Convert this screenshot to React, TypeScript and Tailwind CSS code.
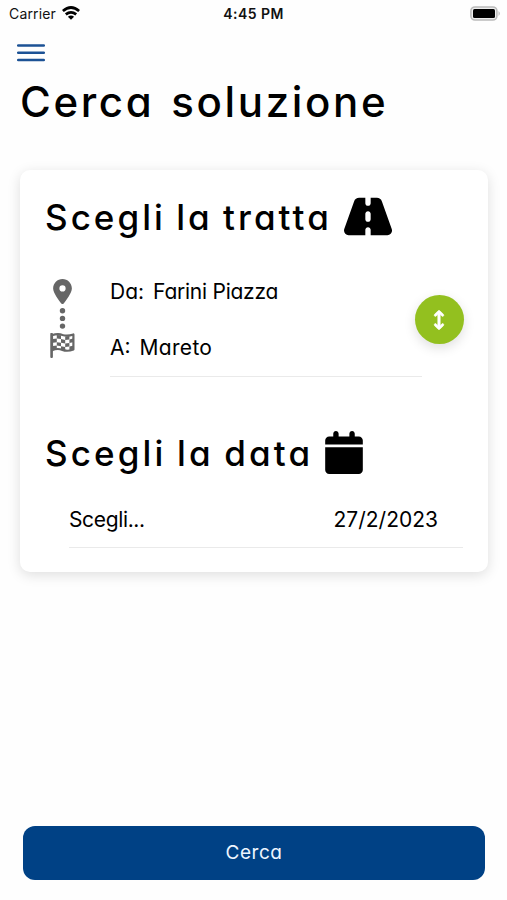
import { FaArrowsUpDown, FaCalendar, FaLocationDot, FaRoad } from 'react-icons/fa6';

function StatusBar() {
  return (
    <header className="grid h-[28px] shrink-0 grid-cols-3 items-center px-[9px] text-[#111] [font-feature-settings:normal]">
      <div className="flex items-center gap-[6px]">
        <span className="text-[14px] leading-[28px] tracking-[0.15px]">Carrier</span>
        <svg className="-mt-[2px]" width="18" height="14" viewBox="0 0 18 14" fill="none" stroke="#000" strokeWidth="2.7">
          <path d="M0.9 5 Q9 -2 17.1 5" />
          <path d="M3.8 8.4 Q9 4.2 14.2 8.4" />
          <path d="M9 13.8 L5.9 10.8 Q9 8.4 12.1 10.8 Z" fill="#000" stroke="none" />
        </svg>
      </div>
      <span className="text-center text-[14px] leading-[28px] font-semibold tracking-[0.45px] whitespace-nowrap">
        4:45 PM
      </span>
      <svg className="-mr-[3px] justify-self-end" width="32" height="16" viewBox="0 0 32 16">
        <rect x="1.9" y="1" width="26" height="13" rx="4" fill="#eee" stroke="#bbb" strokeWidth="1.6" />
        <rect x="4" y="3" width="22" height="9" rx="1.5" fill="#000" />
        <path d="M29.6 5 Q31.8 7.5 29.6 10 Z" fill="#aaa" />
      </svg>
    </header>
  );
}

function MenuButton() {
  return (
    <button type="button" aria-label="Menu" className="mt-[16px] ml-[17px] h-[18px] w-[28px]">
      <svg width="28" height="18" viewBox="0 0 28 18" stroke="#1c5295" strokeWidth="2.5" strokeLinecap="round">
        <path d="M1.2 1.5 H26.8 M1.2 8.8 H26.8 M1.2 16.1 H26.8" />
      </svg>
    </button>
  );
}

function CheckeredFlag() {
  return (
    <svg width="25" height="25" viewBox="0 0 25 25">
      <path d="M1.6 1 V23.8" stroke="currentColor" strokeWidth="2.6" strokeLinecap="round" />
      <path
        d="M2 2.2 Q8 0.2 12.5 2 Q17.5 3.6 23.4 1.5 V16.4 Q17.5 18.8 12.5 16.9 Q7.5 15 2 17.2 Z"
        fill="none"
        stroke="currentColor"
        strokeWidth="2.2"
        strokeLinejoin="round"
      />
      <g fill="currentColor">
        <path d="M6.8 2 L11 2.3 V6 L6.8 5.6 Z" />
        <path d="M15.2 3.4 L19.4 3 V6.4 L15.2 6.9 Z" />
        <path d="M3 6 L6.8 5.6 V9.2 L3 9.8 Z" />
        <path d="M11 6 L15.2 6.9 V10.6 L11 9.8 Z" />
        <path d="M19.4 6.4 L23 5.5 V9.3 L19.4 10.1 Z" />
        <path d="M6.8 9.2 L11 9.8 V13.2 L6.8 12.6 Z" />
        <path d="M15.2 10.6 L19.4 10.1 V13.6 L15.2 14 Z" />
        <path d="M3 13 L6.8 12.6 V16 L3 16.6 Z" />
        <path d="M11 13.2 L15.2 14 V17.2 L11 16.4 Z" />
        <path d="M19.4 13.6 L23 12.8 V16.4 L19.4 17.2 Z" />
      </g>
    </svg>
  );
}

function RouteIcons() {
  return (
    <div className="flex w-[35px] flex-col items-center pt-[15px] text-[#666]">
      <FaLocationDot className="h-[25px] w-[19px] shrink-0" />
      <svg className="mt-[4px] mb-[4px]" width="7" height="21" viewBox="0 0 7 21" fill="currentColor">
        <circle cx="3.5" cy="2.8" r="2.7" />
        <circle cx="3.5" cy="10.4" r="2.7" />
        <circle cx="3.5" cy="18.1" r="2.7" />
      </svg>
      <CheckeredFlag />
    </div>
  );
}

export default function App() {
  return (
    <div className="flex h-[900px] w-[507px] flex-col overflow-hidden bg-[#fefefe] font-['Inter','Open_Sans',sans-serif] text-black [font-feature-settings:'cv11']">
      <StatusBar />
      <MenuButton />

      <h1 className="mt-[13px] ml-[20px] text-[42px] leading-[54px] font-medium tracking-[2.65px] [word-spacing:3px] whitespace-nowrap">
        Cerca soluzione
      </h1>

      <main className="mt-[41px] ml-[20px] flex h-[402px] w-[468px] shrink-0 flex-col rounded-[10px] bg-white pl-[25px] shadow-[0_3px_13px_rgba(0,0,0,0.13)]">
        <h2 className="mt-[20px] flex h-[54px] items-center gap-[12px] text-[35px] leading-[54px] font-medium tracking-[3.03px] [word-spacing:-2px] whitespace-nowrap">
          Scegli la tratta
          <FaRoad className="-mt-[2px] h-[43px] w-[48px]" />
        </h2>

        {/* departure and arrival */}
        <div className="mt-[20px] flex h-[113px]">
          <RouteIcons />
          <div className="ml-[30px] w-[312px] text-[21px] leading-[56px]">
            <div className="flex h-[56px] gap-[9px]">
              <span>Da:</span>
              <span className="tracking-[-0.25px]">Farini Piazza</span>
            </div>
            <div className="flex h-[57px] gap-[9px] border-b-[1.5px] border-[#eaeaea]">
              <span>A:</span>
              <span className="tracking-[0.3px]">Mareto</span>
            </div>
          </div>
          <button
            type="button"
            aria-label="Inverti"
            className="mt-[31px] -ml-[7px] flex size-[49px] items-center justify-center rounded-full bg-[#93c01f] text-white shadow-[0_4px_12px_rgba(0,0,0,0.13)]"
          >
            <FaArrowsUpDown className="mr-[1px] h-[24px] w-[12px] stroke-white stroke-[16px]" />
          </button>
        </div>

        <h2 className="mt-[49px] flex h-[54px] items-center gap-[12px] text-[35px] leading-[54px] font-medium tracking-[3.14px] [word-spacing:-2px] whitespace-nowrap">
          Scegli la data
          <FaCalendar className="-mt-[2px] h-[43px] w-[38px]" />
        </h2>

        <div className="mt-[12px] ml-[24px] flex h-[56px] w-[394px] justify-between border-b-[1.5px] border-[#eaeaea] pr-[25px] text-[21px] leading-[56px]">
          <span className="tracking-[-0.35px]">Scegli...</span>
          <span>27/2/2023</span>
        </div>
      </main>

      <button
        type="button"
        className="mt-auto mb-[20px] ml-[23px] h-[54px] w-[462px] shrink-0 rounded-[12px] bg-[#004185] text-[19px] tracking-[0.5px] text-[#edf5ff]"
      >
        Cerca
      </button>
    </div>
  );
}
